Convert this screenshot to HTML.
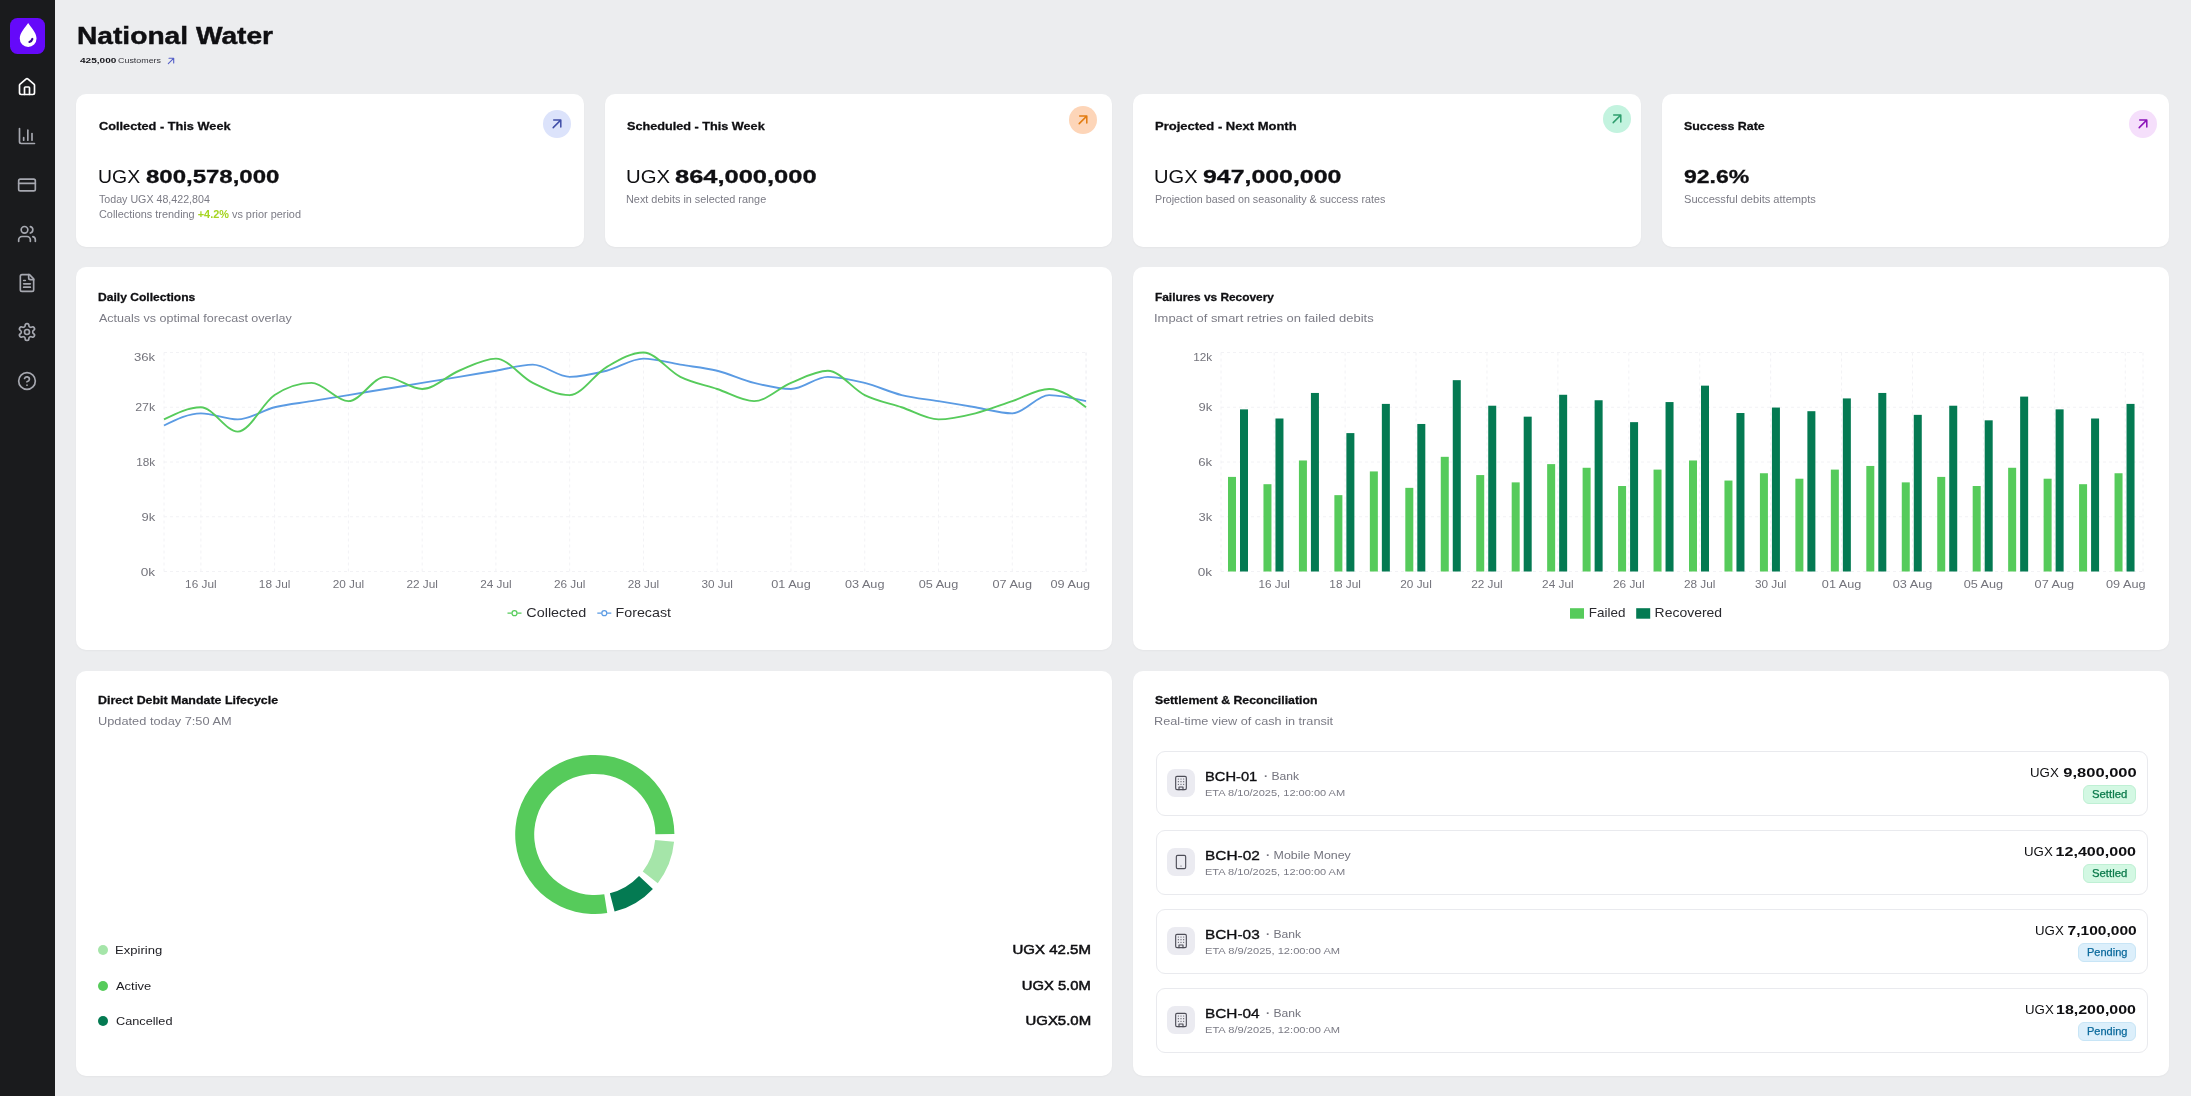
<!DOCTYPE html>
<html lang="en"><head><meta charset="utf-8"><title>National Water</title>
<style>
*{box-sizing:border-box;margin:0;padding:0}
html,body{width:2191px;height:1096px;overflow:hidden;background:#ecedef;font-family:"Liberation Sans", sans-serif;color:#0f0f12}
.abs{position:absolute}
#side{position:absolute;left:0;top:0;width:55.3px;height:1096px;background:#1a1b1d}
#logo{position:absolute;left:9.9px;top:17.9px;width:35.4px;height:36.2px;border-radius:7.5px;background:#6509fa}
.sic{position:absolute;left:17.4px;width:20px;height:20px}
.sic svg{display:block}
.card{position:absolute;background:#fff;border-radius:10px;box-shadow:0 1px 2px rgba(16,24,40,.035)}
.t{position:absolute;white-space:nowrap;line-height:1;will-change:transform}
svg text{font-family:"Liberation Sans", sans-serif}
.ax text{font-size:11.2px}
.lg text{font-size:13.1px}
.dot{position:absolute;left:98.4px;width:10px;height:10px;border-radius:50%}
.row{position:absolute;left:1155.5px;width:992px;height:64.5px;border:1px solid #e9eaee;border-radius:9px;background:#fff}
.ricon{position:absolute;left:10.3px;top:16.7px;width:28px;height:28px;border-radius:8px;background:#ebebf1;color:#4e4e58}
.ricon svg{position:absolute;left:6px;top:6px}
.badge{position:absolute;height:18.6px;border-radius:6px;border:1px solid}
.badge.settled{background:#d3f8e3;border-color:#bff0d4}
.badge.pending{background:#dceffb;border-color:#c8e5f6}
</style></head><body>
<div id="side"><div id="logo"><svg width="35.4" height="36.2" viewBox="0 0 35.4 36.2"><path d="M18.15,5.1C20.5,8.8 26.55,14.8 26.55,20.5A8.4,8.4 0 0 1 9.75,20.5C9.75,14.8 15.8,8.8 18.15,5.1Z" fill="#fff"/><path d="M22.4,20.9C22,22.4 20.9,23.5 19.4,23.9" fill="none" stroke="#3b0a96" stroke-width="2.1" stroke-linecap="round"/></svg></div><div class="sic" style="top:77.4px;color:#ffffff"><svg width="20" height="20" viewBox="0 0 24 24" fill="none" stroke="currentColor" stroke-width="2" stroke-linecap="round" stroke-linejoin="round"><path d="M15 21v-8a1 1 0 0 0-1-1h-4a1 1 0 0 0-1 1v8"/><path d="M3 10a2 2 0 0 1 .709-1.528l7-5.999a2 2 0 0 1 2.582 0l7 5.999A2 2 0 0 1 21 10v9a2 2 0 0 1-2 2H5a2 2 0 0 1-2-2z"/></svg></div><div class="sic" style="top:126.4px;color:#a6a8b0"><svg width="20" height="20" viewBox="0 0 24 24" fill="none" stroke="currentColor" stroke-width="2" stroke-linecap="round" stroke-linejoin="round"><path d="M3 3v16a2 2 0 0 0 2 2h16"/><path d="M18 17V9"/><path d="M13 17V5"/><path d="M8 17v-3"/></svg></div><div class="sic" style="top:175.4px;color:#a6a8b0"><svg width="20" height="20" viewBox="0 0 24 24" fill="none" stroke="currentColor" stroke-width="2" stroke-linecap="round" stroke-linejoin="round"><rect width="20" height="14" x="2" y="5" rx="2"/><line x1="2" x2="22" y1="10" y2="10"/></svg></div><div class="sic" style="top:224.4px;color:#a6a8b0"><svg width="20" height="20" viewBox="0 0 24 24" fill="none" stroke="currentColor" stroke-width="2" stroke-linecap="round" stroke-linejoin="round"><path d="M16 21v-2a4 4 0 0 0-4-4H6a4 4 0 0 0-4 4v2"/><circle cx="9" cy="7" r="4"/><path d="M22 21v-2a4 4 0 0 0-3-3.87"/><path d="M16 3.13a4 4 0 0 1 0 7.75"/></svg></div><div class="sic" style="top:273.4px;color:#a6a8b0"><svg width="20" height="20" viewBox="0 0 24 24" fill="none" stroke="currentColor" stroke-width="2" stroke-linecap="round" stroke-linejoin="round"><path d="M15 2H6a2 2 0 0 0-2 2v16a2 2 0 0 0 2 2h12a2 2 0 0 0 2-2V7Z"/><path d="M14 2v4a2 2 0 0 0 2 2h4"/><path d="M10 9H8"/><path d="M16 13H8"/><path d="M16 17H8"/></svg></div><div class="sic" style="top:322.4px;color:#a6a8b0"><svg width="20" height="20" viewBox="0 0 24 24" fill="none" stroke="currentColor" stroke-width="2" stroke-linecap="round" stroke-linejoin="round"><path d="M12.22 2h-.44a2 2 0 0 0-2 2v.18a2 2 0 0 1-1 1.73l-.43.25a2 2 0 0 1-2 0l-.15-.08a2 2 0 0 0-2.73.73l-.22.38a2 2 0 0 0 .73 2.73l.15.1a2 2 0 0 1 1 1.72v.51a2 2 0 0 1-1 1.74l-.15.09a2 2 0 0 0-.73 2.73l.22.38a2 2 0 0 0 2.73.73l.15-.08a2 2 0 0 1 2 0l.43.25a2 2 0 0 1 1 1.73V20a2 2 0 0 0 2 2h.44a2 2 0 0 0 2-2v-.18a2 2 0 0 1 1-1.73l.43-.25a2 2 0 0 1 2 0l.15.08a2 2 0 0 0 2.73-.73l.22-.39a2 2 0 0 0-.73-2.73l-.15-.08a2 2 0 0 1-1-1.74v-.5a2 2 0 0 1 1-1.74l.15-.09a2 2 0 0 0 .73-2.73l-.22-.38a2 2 0 0 0-2.73-.73l-.15.08a2 2 0 0 1-2 0l-.43-.25a2 2 0 0 1-1-1.73V4a2 2 0 0 0-2-2z"/><circle cx="12" cy="12" r="3"/></svg></div><div class="sic" style="top:371.4px;color:#a6a8b0"><svg width="20" height="20" viewBox="0 0 24 24" fill="none" stroke="currentColor" stroke-width="2" stroke-linecap="round" stroke-linejoin="round"><circle cx="12" cy="12" r="10"/><path d="M9.09 9a3 3 0 0 1 5.83 1c0 2-3 3-3 3"/><path d="M12 17h.01"/></svg></div></div>
<svg class="abs" style="left:166.6px;top:56.9px" width="8" height="8" viewBox="0 0 8 8"><path d="M1.3,6.7L6.6,1.4M2,1.3H6.7V6" fill="none" stroke="#5560c8" stroke-width="1.1" stroke-linecap="round" stroke-linejoin="round"/></svg>
<div class="card" style="left:76.2px;top:94px;width:507.7px;height:153px"></div><div class="card" style="left:604.8px;top:94px;width:507.4px;height:153px"></div><div class="card" style="left:1133.4px;top:94px;width:507.5px;height:153px"></div><div class="card" style="left:1661.9px;top:94px;width:507.6px;height:153px"></div><div class="card" style="left:76.2px;top:267.4px;width:1035.8px;height:382.2px"></div><div class="card" style="left:1133.4px;top:267.4px;width:1036.1px;height:382.2px"></div><div class="card" style="left:76.2px;top:671px;width:1035.8px;height:404.9px"></div><div class="card" style="left:1133.4px;top:671px;width:1036.1px;height:404.9px"></div>
<svg class="abs" style="left:543.3px;top:109.5px" width="28" height="28" viewBox="0 0 28 28"><circle cx="14" cy="14" r="14" fill="#dce3fb"/><path d="M10.2,17.6L17.7,10.1M10.7,9.9H17.8V17" fill="none" stroke="#3f4ea8" stroke-width="1.5" stroke-linecap="round" stroke-linejoin="round"/></svg><svg class="abs" style="left:1069.0px;top:105.5px" width="28" height="28" viewBox="0 0 28 28"><circle cx="14" cy="14" r="14" fill="#fdd5b8"/><path d="M10.2,17.6L17.7,10.1M10.7,9.9H17.8V17" fill="none" stroke="#e27b0f" stroke-width="1.5" stroke-linecap="round" stroke-linejoin="round"/></svg><svg class="abs" style="left:1603.0px;top:105.4px" width="28" height="28" viewBox="0 0 28 28"><circle cx="14" cy="14" r="14" fill="#c3f3df"/><path d="M10.2,17.6L17.7,10.1M10.7,9.9H17.8V17" fill="none" stroke="#2f9e6e" stroke-width="1.5" stroke-linecap="round" stroke-linejoin="round"/></svg><svg class="abs" style="left:2129.2px;top:109.5px" width="28" height="28" viewBox="0 0 28 28"><circle cx="14" cy="14" r="14" fill="#f5dffb"/><path d="M10.2,17.6L17.7,10.1M10.7,9.9H17.8V17" fill="none" stroke="#8a12b8" stroke-width="1.5" stroke-linecap="round" stroke-linejoin="round"/></svg>
<div class="row" style="top:751.1px"><div class="ricon"><svg width="16" height="16" viewBox="0 0 24 24" fill="none" stroke="currentColor" stroke-width="1.7" stroke-linecap="round" stroke-linejoin="round"><rect width="16" height="20" x="4" y="2" rx="2" ry="2"/><path d="M9 22v-4h6v4"/><path d="M8 6h.01"/><path d="M16 6h.01"/><path d="M12 6h.01"/><path d="M12 10h.01"/><path d="M12 14h.01"/><path d="M16 10h.01"/><path d="M16 14h.01"/><path d="M8 10h.01"/><path d="M8 14h.01"/></svg></div></div><div class="t" style="left:1204.99px;transform-origin:0 0;top:769.53px;font-size:13.2px;color:#0f0f12;transform:scaleX(1.1145);-webkit-text-stroke:0.35px #0f0f12;">BCH-01</div><div class="t" style="left:1263.86px;transform-origin:0 0;top:770.92px;font-size:11.2px;color:#74747e;transform:scaleX(1.0849);"><span style="font-weight:700;">· </span>Bank</div><div class="t" style="left:1204.79px;transform-origin:0 0;top:788.22px;font-size:9.9px;color:#7b7b85;transform:scaleX(1.1164);">ETA 8/10/2025, 12:00:00 AM</div><div class="t" style="left:2030.37px;transform-origin:0 0;top:766.13px;font-size:13.2px;color:#0f0f12;transform:scaleX(1.0070);">UGX</div><div class="t" style="right:54.52px;transform-origin:100% 0;top:766.13px;font-size:13.2px;color:#0f0f12;transform:scaleX(1.2508);"><span style="font-weight:700;">9,800,000</span></div><div class="badge settled" style="left:2083.3px;top:785.1px;width:52.5px"></div><div class="t" style="left:2091.69px;transform-origin:0 0;top:790.24px;font-size:10.0px;color:#0b7a4b;transform:scaleX(1.1320);-webkit-text-stroke:0.25px #0b7a4b;">Settled</div><div class="row" style="top:830.1px"><div class="ricon"><svg width="16" height="16" viewBox="0 0 24 24" fill="none" stroke="currentColor" stroke-width="1.7" stroke-linecap="round" stroke-linejoin="round"><rect width="14" height="20" x="5" y="2" rx="2" ry="2"/><path d="M12 18h.01"/></svg></div></div><div class="t" style="left:1204.94px;transform-origin:0 0;top:848.58px;font-size:13.2px;color:#0f0f12;transform:scaleX(1.1681);-webkit-text-stroke:0.35px #0f0f12;">BCH-02</div><div class="t" style="left:1266.25px;transform-origin:0 0;top:849.97px;font-size:11.2px;color:#74747e;transform:scaleX(1.1086);"><span style="font-weight:700;">· </span>Mobile Money</div><div class="t" style="left:1204.79px;transform-origin:0 0;top:867.27px;font-size:9.9px;color:#7b7b85;transform:scaleX(1.1164);">ETA 8/10/2025, 12:00:00 AM</div><div class="t" style="left:2024.17px;transform-origin:0 0;top:845.18px;font-size:13.2px;color:#0f0f12;transform:scaleX(1.0070);">UGX</div><div class="t" style="right:54.54px;transform-origin:100% 0;top:845.18px;font-size:13.2px;color:#0f0f12;transform:scaleX(1.2181);"><span style="font-weight:700;">12,400,000</span></div><div class="badge settled" style="left:2083.3px;top:864.1px;width:52.5px"></div><div class="t" style="left:2091.69px;transform-origin:0 0;top:869.28px;font-size:10.0px;color:#0b7a4b;transform:scaleX(1.1320);-webkit-text-stroke:0.25px #0b7a4b;">Settled</div><div class="row" style="top:909.2px"><div class="ricon"><svg width="16" height="16" viewBox="0 0 24 24" fill="none" stroke="currentColor" stroke-width="1.7" stroke-linecap="round" stroke-linejoin="round"><rect width="16" height="20" x="4" y="2" rx="2" ry="2"/><path d="M9 22v-4h6v4"/><path d="M8 6h.01"/><path d="M16 6h.01"/><path d="M12 6h.01"/><path d="M12 10h.01"/><path d="M12 14h.01"/><path d="M16 10h.01"/><path d="M16 14h.01"/><path d="M8 10h.01"/><path d="M8 14h.01"/></svg></div></div><div class="t" style="left:1204.94px;transform-origin:0 0;top:927.63px;font-size:13.2px;color:#0f0f12;transform:scaleX(1.1659);-webkit-text-stroke:0.35px #0f0f12;">BCH-03</div><div class="t" style="left:1266.26px;transform-origin:0 0;top:929.02px;font-size:11.2px;color:#74747e;transform:scaleX(1.0849);"><span style="font-weight:700;">· </span>Bank</div><div class="t" style="left:1204.79px;transform-origin:0 0;top:946.32px;font-size:9.9px;color:#7b7b85;transform:scaleX(1.1253);">ETA 8/9/2025, 12:00:00 AM</div><div class="t" style="left:2035.47px;transform-origin:0 0;top:924.23px;font-size:13.2px;color:#0f0f12;transform:scaleX(1.0070);">UGX</div><div class="t" style="right:54.56px;transform-origin:100% 0;top:924.23px;font-size:13.2px;color:#0f0f12;transform:scaleX(1.1785);"><span style="font-weight:700;">7,100,000</span></div><div class="badge pending" style="left:2078.2px;top:943.2px;width:57.6px"></div><div class="t" style="left:2086.70px;transform-origin:0 0;top:948.34px;font-size:10.0px;color:#0b6a9c;transform:scaleX(1.1012);-webkit-text-stroke:0.25px #0b6a9c;">Pending</div><div class="row" style="top:988.2px"><div class="ricon"><svg width="16" height="16" viewBox="0 0 24 24" fill="none" stroke="currentColor" stroke-width="1.7" stroke-linecap="round" stroke-linejoin="round"><rect width="16" height="20" x="4" y="2" rx="2" ry="2"/><path d="M9 22v-4h6v4"/><path d="M8 6h.01"/><path d="M16 6h.01"/><path d="M12 6h.01"/><path d="M12 10h.01"/><path d="M12 14h.01"/><path d="M16 10h.01"/><path d="M16 14h.01"/><path d="M8 10h.01"/><path d="M8 14h.01"/></svg></div></div><div class="t" style="left:1204.94px;transform-origin:0 0;top:1006.68px;font-size:13.2px;color:#0f0f12;transform:scaleX(1.1654);-webkit-text-stroke:0.35px #0f0f12;">BCH-04</div><div class="t" style="left:1266.46px;transform-origin:0 0;top:1008.07px;font-size:11.2px;color:#74747e;transform:scaleX(1.0849);"><span style="font-weight:700;">· </span>Bank</div><div class="t" style="left:1204.79px;transform-origin:0 0;top:1025.37px;font-size:9.9px;color:#7b7b85;transform:scaleX(1.1253);">ETA 8/9/2025, 12:00:00 AM</div><div class="t" style="left:2024.57px;transform-origin:0 0;top:1003.28px;font-size:13.2px;color:#0f0f12;transform:scaleX(1.0070);">UGX</div><div class="t" style="right:54.54px;transform-origin:100% 0;top:1003.28px;font-size:13.2px;color:#0f0f12;transform:scaleX(1.2119);"><span style="font-weight:700;">18,200,000</span></div><div class="badge pending" style="left:2078.2px;top:1022.2px;width:57.6px"></div><div class="t" style="left:2086.70px;transform-origin:0 0;top:1027.38px;font-size:10.0px;color:#0b6a9c;transform:scaleX(1.1012);-webkit-text-stroke:0.25px #0b6a9c;">Pending</div>
<div class="t" id="title" style="left:77.12px;transform-origin:0 0;top:23.90px;font-size:24.1px;color:#0f0f12;transform:scaleX(1.1685);-webkit-text-stroke:0.45px #0f0f12;"><span style="font-weight:700;">National Water</span></div><div class="t" style="left:80.15px;transform-origin:0 0;top:56.77px;font-size:7.6px;color:#15151a;transform:scaleX(1.3274);"><span style="font-weight:700;">425,000</span></div><div class="t" style="left:118.35px;transform-origin:0 0;top:56.77px;font-size:7.6px;color:#33333a;transform:scaleX(1.1723);">Customers</div><div class="t" style="left:98.58px;transform-origin:0 0;top:120.62px;font-size:11.2px;color:#0f0f12;transform:scaleX(1.1398);-webkit-text-stroke:0.28px #0f0f12;"><span style="font-weight:700;">Collected - This Week</span></div><div class="t" style="left:97.60px;transform-origin:0 0;top:166.85px;font-size:19.2px;color:#0f0f12;transform:scaleX(1.0120);">UGX</div><div class="t" style="left:145.64px;transform-origin:0 0;top:166.85px;font-size:19.2px;color:#0f0f12;transform:scaleX(1.2498);-webkit-text-stroke:0.3px #0f0f12;"><span style="font-weight:700;">800,578,000</span></div><div class="t" style="left:98.86px;transform-origin:0 0;top:195.13px;font-size:10.0px;color:#7b7b85;transform:scaleX(1.0663);">Today UGX 48,422,804</div><div class="t" style="left:98.55px;transform-origin:0 0;top:209.73px;font-size:10.0px;color:#7b7b85;transform:scaleX(1.0894);">Collections trending <span style="font-weight:700;color:#a6d521;">+4.2%</span> vs prior period</div><div class="t" style="left:626.73px;transform-origin:0 0;top:120.62px;font-size:11.2px;color:#0f0f12;transform:scaleX(1.1320);-webkit-text-stroke:0.28px #0f0f12;"><span style="font-weight:700;">Scheduled - This Week</span></div><div class="t" style="left:625.53px;transform-origin:0 0;top:166.85px;font-size:19.2px;color:#0f0f12;transform:scaleX(1.0599);">UGX</div><div class="t" style="left:674.79px;transform-origin:0 0;top:166.85px;font-size:19.2px;color:#0f0f12;transform:scaleX(1.3267);-webkit-text-stroke:0.3px #0f0f12;"><span style="font-weight:700;">864,000,000</span></div><div class="t" style="left:626.21px;transform-origin:0 0;top:195.13px;font-size:10.0px;color:#7b7b85;transform:scaleX(1.0869);">Next debits in selected range</div><div class="t" style="left:1154.93px;transform-origin:0 0;top:120.62px;font-size:11.2px;color:#0f0f12;transform:scaleX(1.1625);-webkit-text-stroke:0.28px #0f0f12;"><span style="font-weight:700;">Projected - Next Month</span></div><div class="t" style="left:1154.25px;transform-origin:0 0;top:166.85px;font-size:19.2px;color:#0f0f12;transform:scaleX(1.0473);">UGX</div><div class="t" style="left:1202.94px;transform-origin:0 0;top:166.85px;font-size:19.2px;color:#0f0f12;transform:scaleX(1.2961);-webkit-text-stroke:0.3px #0f0f12;"><span style="font-weight:700;">947,000,000</span></div><div class="t" style="left:1154.92px;transform-origin:0 0;top:195.13px;font-size:10.0px;color:#7b7b85;transform:scaleX(1.0732);">Projection based on seasonality &amp; success rates</div><div class="t" style="left:1683.94px;transform-origin:0 0;top:120.62px;font-size:11.2px;color:#0f0f12;transform:scaleX(1.1090);-webkit-text-stroke:0.28px #0f0f12;"><span style="font-weight:700;">Success Rate</span></div><div class="t" style="left:1683.50px;transform-origin:0 0;top:166.85px;font-size:19.2px;color:#0f0f12;transform:scaleX(1.1996);-webkit-text-stroke:0.3px #0f0f12;"><span style="font-weight:700;">92.6%</span></div><div class="t" style="left:1683.80px;transform-origin:0 0;top:195.13px;font-size:10.0px;color:#7b7b85;transform:scaleX(1.1089);">Successful debits attempts</div><div class="t" style="left:98.09px;transform-origin:0 0;top:291.52px;font-size:11.2px;color:#0f0f12;transform:scaleX(1.0793);-webkit-text-stroke:0.28px #0f0f12;"><span style="font-weight:700;">Daily Collections</span></div><div class="t" style="left:99.18px;transform-origin:0 0;top:312.52px;font-size:11.2px;color:#7b7b85;transform:scaleX(1.1190);">Actuals vs optimal forecast overlay</div><div class="t" style="left:1154.70px;transform-origin:0 0;top:291.52px;font-size:11.2px;color:#0f0f12;transform:scaleX(1.0624);-webkit-text-stroke:0.28px #0f0f12;"><span style="font-weight:700;">Failures vs Recovery</span></div><div class="t" style="left:1154.30px;transform-origin:0 0;top:312.52px;font-size:11.2px;color:#7b7b85;transform:scaleX(1.1580);">Impact of smart retries on failed debits</div><div class="t" style="left:98.17px;transform-origin:0 0;top:694.52px;font-size:11.2px;color:#0f0f12;transform:scaleX(1.1096);-webkit-text-stroke:0.28px #0f0f12;"><span style="font-weight:700;">Direct Debit Mandate Lifecycle</span></div><div class="t" style="left:97.81px;transform-origin:0 0;top:715.52px;font-size:11.2px;color:#7b7b85;transform:scaleX(1.1425);">Updated today 7:50 AM</div><div class="t" style="left:1155.15px;transform-origin:0 0;top:694.52px;font-size:11.2px;color:#0f0f12;transform:scaleX(1.0979);-webkit-text-stroke:0.28px #0f0f12;"><span style="font-weight:700;">Settlement &amp; Reconciliation</span></div><div class="t" style="left:1154.46px;transform-origin:0 0;top:715.52px;font-size:11.2px;color:#7b7b85;transform:scaleX(1.1343);">Real-time view of cash in transit</div><div class="dot" style="top:945.2px;background:#a5e5a9"></div><div class="t" style="left:115.13px;transform-origin:0 0;top:945.32px;font-size:11.2px;color:#1c1c21;transform:scaleX(1.1668);">Expiring</div><div class="t" style="right:1099.97px;transform-origin:100% 0;top:943.20px;font-size:13px;color:#0f0f12;transform:scaleX(1.1542);-webkit-text-stroke:0.5px #0f0f12;">UGX 42.5M</div><div class="dot" style="top:980.7px;background:#56cb5b"></div><div class="t" style="left:116.17px;transform-origin:0 0;top:980.77px;font-size:11.2px;color:#1c1c21;transform:scaleX(1.1541);">Active</div><div class="t" style="right:1099.99px;transform-origin:100% 0;top:978.65px;font-size:13px;color:#0f0f12;transform:scaleX(1.1345);-webkit-text-stroke:0.5px #0f0f12;">UGX 5.0M</div><div class="dot" style="top:1016.1px;background:#047a52"></div><div class="t" style="left:115.55px;transform-origin:0 0;top:1016.22px;font-size:11.2px;color:#1c1c21;transform:scaleX(1.1356);">Cancelled</div><div class="t" style="right:1099.97px;transform-origin:100% 0;top:1014.10px;font-size:13px;color:#0f0f12;transform:scaleX(1.1490);-webkit-text-stroke:0.5px #0f0f12;">UGX5.0M</div>
<svg class="abs" style="left:0;top:0;pointer-events:none" width="2191" height="1096" viewBox="0 0 2191 1096">
<g stroke="#f2f2f5" stroke-width="1" stroke-dasharray="3 3" fill="none"><line x1="164.00" y1="571.50" x2="1086.00" y2="571.50"/><line x1="164.00" y1="516.75" x2="1086.00" y2="516.75"/><line x1="164.00" y1="462.00" x2="1086.00" y2="462.00"/><line x1="164.00" y1="407.25" x2="1086.00" y2="407.25"/><line x1="164.00" y1="352.50" x2="1086.00" y2="352.50"/><line x1="200.88" y1="352.50" x2="200.88" y2="571.50"/><line x1="274.64" y1="352.50" x2="274.64" y2="571.50"/><line x1="348.40" y1="352.50" x2="348.40" y2="571.50"/><line x1="422.16" y1="352.50" x2="422.16" y2="571.50"/><line x1="495.92" y1="352.50" x2="495.92" y2="571.50"/><line x1="569.68" y1="352.50" x2="569.68" y2="571.50"/><line x1="643.44" y1="352.50" x2="643.44" y2="571.50"/><line x1="717.20" y1="352.50" x2="717.20" y2="571.50"/><line x1="790.96" y1="352.50" x2="790.96" y2="571.50"/><line x1="864.72" y1="352.50" x2="864.72" y2="571.50"/><line x1="938.48" y1="352.50" x2="938.48" y2="571.50"/><line x1="1012.24" y1="352.50" x2="1012.24" y2="571.50"/><line x1="1086.00" y1="352.50" x2="1086.00" y2="571.50"/><line x1="164.00" y1="352.50" x2="164.00" y2="571.50"/><line x1="1086.00" y1="352.50" x2="1086.00" y2="571.50"/></g><path d="M164.00,425.50C176.29,419.42,188.59,413.33,200.88,413.33C213.17,413.33,225.47,419.42,237.76,419.42C250.05,419.42,262.35,410.29,274.64,407.25C286.93,404.21,299.23,403.19,311.52,401.17C323.81,399.14,336.11,397.11,348.40,395.08C360.69,393.06,372.99,391.03,385.28,389.00C397.57,386.97,409.87,384.94,422.16,382.92C434.45,380.89,446.75,378.86,459.04,376.83C471.33,374.81,483.63,372.78,495.92,370.75C508.21,368.72,520.51,364.67,532.80,364.67C545.09,364.67,557.39,376.83,569.68,376.83C581.97,376.83,594.27,373.79,606.56,370.75C618.85,367.71,631.15,358.58,643.44,358.58C655.73,358.58,668.03,362.64,680.32,364.67C692.61,366.69,704.91,367.71,717.20,370.75C729.49,373.79,741.79,379.87,754.08,382.92C766.37,385.96,778.67,389.00,790.96,389.00C803.25,389.00,815.55,376.83,827.84,376.83C840.13,376.83,852.43,379.87,864.72,382.92C877.01,385.96,889.31,392.04,901.60,395.08C913.89,398.13,926.19,399.14,938.48,401.17C950.77,403.19,963.07,405.22,975.36,407.25C987.65,409.28,999.95,413.33,1012.24,413.33C1024.53,413.33,1036.83,395.08,1049.12,395.08C1061.41,395.08,1073.71,398.12,1086.00,401.17" fill="none" stroke="#5b9be3" stroke-width="1.9"/><path d="M164.00,419.42C176.29,413.33,188.59,407.25,200.88,407.25C213.17,407.25,225.47,431.58,237.76,431.58C250.05,431.58,262.35,403.19,274.64,395.08C286.93,386.97,299.23,382.92,311.52,382.92C323.81,382.92,336.11,401.17,348.40,401.17C360.69,401.17,372.99,376.83,385.28,376.83C397.57,376.83,409.87,389.00,422.16,389.00C434.45,389.00,446.75,375.82,459.04,370.75C471.33,365.68,483.63,358.58,495.92,358.58C508.21,358.58,520.51,376.83,532.80,382.92C545.09,389.00,557.39,395.08,569.68,395.08C581.97,395.08,594.27,374.20,606.56,367.10C618.85,360.00,631.15,352.50,643.44,352.50C655.73,352.50,668.03,370.75,680.32,376.83C692.61,382.92,704.91,384.94,717.20,389.00C729.49,393.06,741.79,401.17,754.08,401.17C766.37,401.17,778.67,387.99,790.96,382.92C803.25,377.85,815.55,370.75,827.84,370.75C840.13,370.75,852.43,389.00,864.72,395.08C877.01,401.17,889.31,403.19,901.60,407.25C913.89,411.31,926.19,419.42,938.48,419.42C950.77,419.42,963.07,416.38,975.36,413.33C987.65,410.29,999.95,405.22,1012.24,401.17C1024.53,397.11,1036.83,389.00,1049.12,389.00C1061.41,389.00,1073.71,398.12,1086.00,407.25" fill="none" stroke="#56cb5b" stroke-width="1.9"/><g class="ax" fill="#74747c"><text x="155.20" y="575.60" text-anchor="end" textLength="14.4" lengthAdjust="spacingAndGlyphs">0k</text><text x="155.20" y="520.85" text-anchor="end" textLength="13.7" lengthAdjust="spacingAndGlyphs">9k</text><text x="155.20" y="466.10" text-anchor="end" textLength="19.0" lengthAdjust="spacingAndGlyphs">18k</text><text x="155.20" y="411.35" text-anchor="end" textLength="20.0" lengthAdjust="spacingAndGlyphs">27k</text><text x="155.20" y="361.00" text-anchor="end" textLength="21.2" lengthAdjust="spacingAndGlyphs">36k</text><text x="200.88" y="587.70" text-anchor="middle" textLength="31.5" lengthAdjust="spacingAndGlyphs">16 Jul</text><text x="274.64" y="587.70" text-anchor="middle" textLength="31.5" lengthAdjust="spacingAndGlyphs">18 Jul</text><text x="348.40" y="587.70" text-anchor="middle" textLength="31.5" lengthAdjust="spacingAndGlyphs">20 Jul</text><text x="422.16" y="587.70" text-anchor="middle" textLength="31.5" lengthAdjust="spacingAndGlyphs">22 Jul</text><text x="495.92" y="587.70" text-anchor="middle" textLength="31.5" lengthAdjust="spacingAndGlyphs">24 Jul</text><text x="569.68" y="587.70" text-anchor="middle" textLength="31.5" lengthAdjust="spacingAndGlyphs">26 Jul</text><text x="643.44" y="587.70" text-anchor="middle" textLength="31.5" lengthAdjust="spacingAndGlyphs">28 Jul</text><text x="717.20" y="587.70" text-anchor="middle" textLength="31.5" lengthAdjust="spacingAndGlyphs">30 Jul</text><text x="790.96" y="587.70" text-anchor="middle" textLength="39.5" lengthAdjust="spacingAndGlyphs">01 Aug</text><text x="864.72" y="587.70" text-anchor="middle" textLength="39.5" lengthAdjust="spacingAndGlyphs">03 Aug</text><text x="938.48" y="587.70" text-anchor="middle" textLength="39.5" lengthAdjust="spacingAndGlyphs">05 Aug</text><text x="1012.24" y="587.70" text-anchor="middle" textLength="39.5" lengthAdjust="spacingAndGlyphs">07 Aug</text><text x="1090.00" y="587.70" text-anchor="end" textLength="39.5" lengthAdjust="spacingAndGlyphs">09 Aug</text></g><g fill="none" stroke-width="1.25"><path d="M507.5,613.2h4.2M517.3,613.2h4.2" stroke="#56cb5b"/><circle cx="514.5" cy="613.2" r="2.5" stroke="#56cb5b"/><path d="M597.3,613.2h4.2M607.1,613.2h4.2" stroke="#5b9be3"/><circle cx="604.3" cy="613.2" r="2.5" stroke="#5b9be3"/></g><g class="lg" fill="#2b2b30"><text x="526.30" y="616.80" text-anchor="start" textLength="60.0" lengthAdjust="spacingAndGlyphs">Collected</text><text x="615.50" y="616.80" text-anchor="start" textLength="55.5" lengthAdjust="spacingAndGlyphs">Forecast</text></g>
<g stroke="#f2f2f5" stroke-width="1" stroke-dasharray="3 3" fill="none"><line x1="1221.00" y1="571.50" x2="2143.00" y2="571.50"/><line x1="1221.00" y1="516.75" x2="2143.00" y2="516.75"/><line x1="1221.00" y1="462.00" x2="2143.00" y2="462.00"/><line x1="1221.00" y1="407.25" x2="2143.00" y2="407.25"/><line x1="1221.00" y1="352.50" x2="2143.00" y2="352.50"/><line x1="1274.19" y1="352.50" x2="1274.19" y2="571.50"/><line x1="1345.12" y1="352.50" x2="1345.12" y2="571.50"/><line x1="1416.04" y1="352.50" x2="1416.04" y2="571.50"/><line x1="1486.96" y1="352.50" x2="1486.96" y2="571.50"/><line x1="1557.88" y1="352.50" x2="1557.88" y2="571.50"/><line x1="1628.81" y1="352.50" x2="1628.81" y2="571.50"/><line x1="1699.73" y1="352.50" x2="1699.73" y2="571.50"/><line x1="1770.65" y1="352.50" x2="1770.65" y2="571.50"/><line x1="1841.58" y1="352.50" x2="1841.58" y2="571.50"/><line x1="1912.50" y1="352.50" x2="1912.50" y2="571.50"/><line x1="1983.42" y1="352.50" x2="1983.42" y2="571.50"/><line x1="2054.35" y1="352.50" x2="2054.35" y2="571.50"/><line x1="2125.27" y1="352.50" x2="2125.27" y2="571.50"/><line x1="1221.00" y1="352.50" x2="1221.00" y2="571.50"/><line x1="2143.00" y1="352.50" x2="2143.00" y2="571.50"/></g><g fill="#56cb5b"><rect x="1228.00" y="476.90" width="8" height="94.60"/><rect x="1263.46" y="484.20" width="8" height="87.30"/><rect x="1298.92" y="460.47" width="8" height="111.03"/><rect x="1334.38" y="495.15" width="8" height="76.35"/><rect x="1369.85" y="471.42" width="8" height="100.08"/><rect x="1405.31" y="487.85" width="8" height="83.65"/><rect x="1440.77" y="456.82" width="8" height="114.68"/><rect x="1476.23" y="475.07" width="8" height="96.43"/><rect x="1511.69" y="482.37" width="8" height="89.13"/><rect x="1547.15" y="464.12" width="8" height="107.38"/><rect x="1582.62" y="467.77" width="8" height="103.73"/><rect x="1618.08" y="486.02" width="8" height="85.48"/><rect x="1653.54" y="469.60" width="8" height="101.90"/><rect x="1689.00" y="460.47" width="8" height="111.03"/><rect x="1724.46" y="480.55" width="8" height="90.95"/><rect x="1759.92" y="473.25" width="8" height="98.25"/><rect x="1795.38" y="478.72" width="8" height="92.78"/><rect x="1830.85" y="469.60" width="8" height="101.90"/><rect x="1866.31" y="465.95" width="8" height="105.55"/><rect x="1901.77" y="482.37" width="8" height="89.13"/><rect x="1937.23" y="476.90" width="8" height="94.60"/><rect x="1972.69" y="486.02" width="8" height="85.48"/><rect x="2008.15" y="467.77" width="8" height="103.73"/><rect x="2043.62" y="478.72" width="8" height="92.78"/><rect x="2079.08" y="484.20" width="8" height="87.30"/><rect x="2114.54" y="473.25" width="8" height="98.25"/></g><g fill="#047a52"><rect x="1240.00" y="409.37" width="8" height="162.13"/><rect x="1275.46" y="418.50" width="8" height="153.00"/><rect x="1310.92" y="392.95" width="8" height="178.55"/><rect x="1346.38" y="433.10" width="8" height="138.40"/><rect x="1381.85" y="403.90" width="8" height="167.60"/><rect x="1417.31" y="423.97" width="8" height="147.53"/><rect x="1452.77" y="380.17" width="8" height="191.33"/><rect x="1488.23" y="405.72" width="8" height="165.78"/><rect x="1523.69" y="416.67" width="8" height="154.83"/><rect x="1559.15" y="394.77" width="8" height="176.73"/><rect x="1594.62" y="400.25" width="8" height="171.25"/><rect x="1630.08" y="422.15" width="8" height="149.35"/><rect x="1665.54" y="402.07" width="8" height="169.43"/><rect x="1701.00" y="385.65" width="8" height="185.85"/><rect x="1736.46" y="413.02" width="8" height="158.48"/><rect x="1771.92" y="407.55" width="8" height="163.95"/><rect x="1807.38" y="411.20" width="8" height="160.30"/><rect x="1842.85" y="398.42" width="8" height="173.08"/><rect x="1878.31" y="392.95" width="8" height="178.55"/><rect x="1913.77" y="414.85" width="8" height="156.65"/><rect x="1949.23" y="405.72" width="8" height="165.78"/><rect x="1984.69" y="420.32" width="8" height="151.18"/><rect x="2020.15" y="396.60" width="8" height="174.90"/><rect x="2055.62" y="409.37" width="8" height="162.13"/><rect x="2091.08" y="418.50" width="8" height="153.00"/><rect x="2126.54" y="403.90" width="8" height="167.60"/></g><g class="ax" fill="#74747c"><text x="1212.20" y="575.60" text-anchor="end" textLength="14.4" lengthAdjust="spacingAndGlyphs">0k</text><text x="1212.20" y="520.85" text-anchor="end" textLength="13.7" lengthAdjust="spacingAndGlyphs">3k</text><text x="1212.20" y="466.10" text-anchor="end" textLength="14.0" lengthAdjust="spacingAndGlyphs">6k</text><text x="1212.20" y="411.35" text-anchor="end" textLength="13.7" lengthAdjust="spacingAndGlyphs">9k</text><text x="1212.20" y="361.00" text-anchor="end" textLength="19.0" lengthAdjust="spacingAndGlyphs">12k</text><text x="1274.19" y="587.70" text-anchor="middle" textLength="31.5" lengthAdjust="spacingAndGlyphs">16 Jul</text><text x="1345.12" y="587.70" text-anchor="middle" textLength="31.5" lengthAdjust="spacingAndGlyphs">18 Jul</text><text x="1416.04" y="587.70" text-anchor="middle" textLength="31.5" lengthAdjust="spacingAndGlyphs">20 Jul</text><text x="1486.96" y="587.70" text-anchor="middle" textLength="31.5" lengthAdjust="spacingAndGlyphs">22 Jul</text><text x="1557.88" y="587.70" text-anchor="middle" textLength="31.5" lengthAdjust="spacingAndGlyphs">24 Jul</text><text x="1628.81" y="587.70" text-anchor="middle" textLength="31.5" lengthAdjust="spacingAndGlyphs">26 Jul</text><text x="1699.73" y="587.70" text-anchor="middle" textLength="31.5" lengthAdjust="spacingAndGlyphs">28 Jul</text><text x="1770.65" y="587.70" text-anchor="middle" textLength="31.5" lengthAdjust="spacingAndGlyphs">30 Jul</text><text x="1841.58" y="587.70" text-anchor="middle" textLength="39.5" lengthAdjust="spacingAndGlyphs">01 Aug</text><text x="1912.50" y="587.70" text-anchor="middle" textLength="39.5" lengthAdjust="spacingAndGlyphs">03 Aug</text><text x="1983.42" y="587.70" text-anchor="middle" textLength="39.5" lengthAdjust="spacingAndGlyphs">05 Aug</text><text x="2054.35" y="587.70" text-anchor="middle" textLength="39.5" lengthAdjust="spacingAndGlyphs">07 Aug</text><text x="2145.50" y="587.70" text-anchor="end" textLength="39.5" lengthAdjust="spacingAndGlyphs">09 Aug</text></g><rect x="1570" y="608.2" width="14" height="10.5" fill="#56cb5b"/><rect x="1636.2" y="608.2" width="14" height="10.5" fill="#047a52"/><g class="lg" fill="#2b2b30"><text x="1588.80" y="616.80" text-anchor="start" textLength="36.6" lengthAdjust="spacingAndGlyphs">Failed</text><text x="1654.60" y="616.80" text-anchor="start" textLength="67.5" lengthAdjust="spacingAndGlyphs">Recovered</text></g>
<path d="M674.40,834.08 A79.60,79.60 0 1 0 607.25,913.12 L604.28,894.35 A60.60,60.60 0 1 1 655.40,834.18 Z" fill="#56cb5b"/><path d="M614.60,911.60 A79.60,79.60 0 0 0 652.92,888.89 L639.05,875.91 A60.60,60.60 0 0 1 609.87,893.20 Z" fill="#047a52"/><path d="M657.78,883.18 A79.60,79.60 0 0 0 674.06,841.85 L655.14,840.10 A60.60,60.60 0 0 1 642.75,871.56 Z" fill="#a5e5a9"/>
</svg>
</body></html>
